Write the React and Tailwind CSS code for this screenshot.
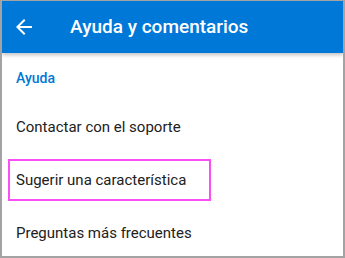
import React from 'react';

const ArrowBack = () => (
    <svg width="24" height="24" viewBox="0 0 24 24" fill="white">
        <path d="M20 11H7.83l5.59-5.59L12 4l-8 8 8 8 1.41-1.41L7.83 13H20v-2z" />
    </svg>
);

const items = ['Contactar con el soporte', 'Sugerir una característica', 'Preguntas más frecuentes'];

const App = () => {
    return (
        <div
            className="w-[345px] h-[258px] overflow-hidden bg-white border-[#a3a3a3] border-x-2 border-b-2 border-t flex flex-col"
            style={{ fontFamily: 'Roboto, "Noto Sans", sans-serif' }}
        >
            <div className="h-[52px] shrink-0 bg-[#0078d7] flex items-center pl-[10px] shadow-[0_2px_4px_rgba(0,0,0,0.25)] relative z-10">
                <ArrowBack />
                <h1 className="ml-[34px] text-white text-[19px] font-medium">Ayuda y comentarios</h1>
            </div>
            <div className="h-[47px] shrink-0 flex items-center pl-[14px] pt-[4px]">
                <span className="text-[#0078d7] text-[14px] font-medium">Ayuda</span>
            </div>
            {items.map((label, i) => (
                <div key={label} className="h-[53px] shrink-0 flex items-center pl-[6px]">
                    <div
                        className={
                            i === 1
                                ? 'w-[203px] h-[42px] flex items-center pl-[6px] pt-[2px] border-2 border-[#f94ff7]'
                                : 'h-[42px] flex items-center pl-[6px] pt-[2px] border-2 border-transparent'
                        }
                    >
                        <span className="text-[#212121] text-[15px]">{label}</span>
                    </div>
                </div>
            ))}
        </div>
    );
};

export default App;
